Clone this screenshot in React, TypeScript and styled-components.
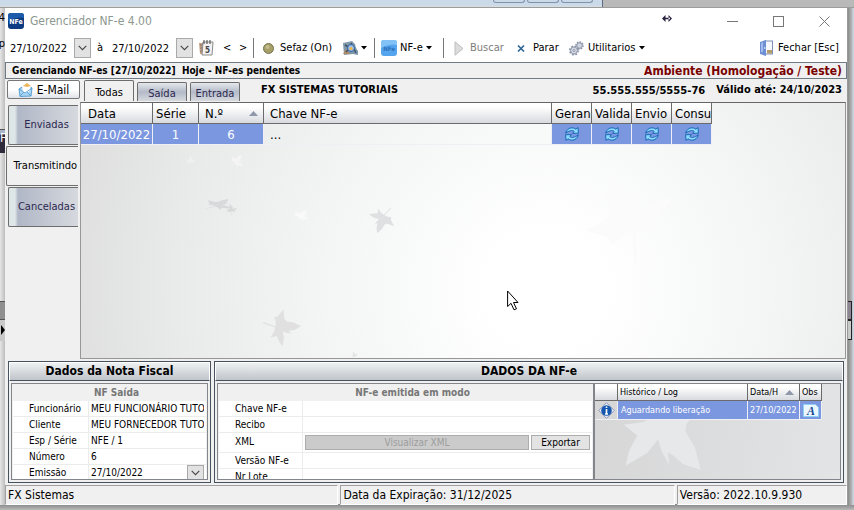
import React from "react";
import styled, { createGlobalStyle, css } from "styled-components";

const condensed = '"DejaVu Sans Condensed", "DejaVu Sans", sans-serif';
const wide = '"DejaVu Sans", sans-serif';

const GlobalStyle = createGlobalStyle`
  *, *::before, *::after { box-sizing: border-box; }
  html, body { margin: 0; }
  body { font-family: ${condensed}; font-size: 12px; line-height: 16px; color: #000; background: #bcbcbc; }
  button, input { font: inherit; color: inherit; margin: 0; padding: 0; border: 0; border-radius: 0; background: none; }
  svg { display: block; flex: none; }
`;

/* ---------- desktop behind the window ---------- */

const Desktop = styled.div`
  display: grid;
  grid-template-columns: 5px minmax(0, 1fr) 6px;
  grid-template-rows: 8px minmax(0, 1fr) 5px;
  min-height: 100vh;
`;

const TopStrip = styled.div`
  grid-column: 1 / -1;
  display: flex;
  justify-content: space-between;
  border-bottom: 1px solid #9c9c9c;
  background: #b9b9b9;
`;

const BackTitle = styled.div`
  width: 603px;
  display: flex;
  justify-content: flex-end;
  gap: 2px;
  padding-right: 9px;
  border-right: 1px solid #5c6b7d;
  background: linear-gradient(#cbdae9 5px, #d9dde0);
`;

const BackButton = styled.span`
  width: 32px;
  height: 3px;
  border: 1px solid #8093ab;
  border-top: 0;
  border-radius: 0 0 3px 3px;
`;

const LeftRail = styled.div`
  display: flex;
  flex-direction: column;
  overflow: hidden;
  background: linear-gradient(90deg, #e6e6e6, #bdbdbd);
`;

const RailText = styled.span<{ $h: number }>`
  height: ${(p) => p.$h}px;
  padding-top: 2px;
  font-size: 11px;
  direction: rtl;
`;

const RailBlock = styled.span<{ $h: number; $bg: string }>`
  height: ${(p) => p.$h}px;
  background: ${(p) => p.$bg};
  border-top: 1px solid #555;
  color: #fff;
  overflow: hidden;
`;

const RightRail = styled.div`
  display: flex;
  flex-direction: column;
  justify-content: flex-end;
  background: linear-gradient(90deg, #8c8c8c, #b8b8b8 4px, #c9d5e2 5px);
`;

const RailCell = styled.span<{ $bg: string; $h: number }>`
  height: ${(p) => p.$h}px;
  margin-right: 2px;
  background: ${(p) => p.$bg};
  border: 1px solid #222;
  border-left: 0;
`;

const RailGap = styled.span<{ $h: number }>`
  height: ${(p) => p.$h}px;
`;

const BottomStrip = styled.div`
  grid-column: 1 / -1;
  background: linear-gradient(#8f8f8f, #b9b9b9);
`;

/* ---------- window frame ---------- */

const Window = styled.main`
  position: relative;
  display: flex;
  flex-direction: column;
  min-width: 0;
  background: #f0f0f0;
  border-right: 1px solid #999;
`;

const TitleBar = styled.header`
  display: flex;
  align-items: center;
  height: 26px;
  padding-left: 3px;
  background: #fff;
  color: #8c978f;
`;

const Title = styled.h1`
  flex: 1;
  margin: 0;
  padding-left: 6px;
  font-size: 12px;
  font-weight: 400;
`;

const CaptionButton = styled.button`
  display: flex;
  justify-content: center;
  width: 46px;
`;

const ToolBar = styled.div`
  display: flex;
  align-items: center;
  height: 28px;
  padding: 0 5px 0 5px;
  background: #fff;
  font-size: 11px;
`;

const DateInput = styled.input`
  width: 64px;
  height: 20px;
`;

const DropButton = styled.button<{ $short?: boolean }>`
  display: flex;
  align-items: center;
  justify-content: center;
  width: 17px;
  height: ${(p) => (p.$short ? 15 : 20)}px;
  border: 1px solid #a9a9a9;
  background: #e2e2e2;
`;

const DateTo = styled.span`
  width: 21px;
  padding-left: 6px;
`;

const ToolButton = styled.button<{ $w: number; $muted?: boolean; $gap?: number }>`
  display: flex;
  align-items: center;
  gap: ${(p) => p.$gap ?? 6}px;
  width: ${(p) => p.$w}px;
  height: 20px;
  white-space: nowrap;
  color: ${(p) => (p.$muted ? "#7d7d7d" : "#000")};
`;

const CalendarButton = styled(ToolButton)`
  margin-left: 6px;
`;

const Divider = styled.span<{ $after: number }>`
  width: 1px;
  height: 20px;
  margin-right: ${(p) => p.$after}px;
  background: #777;
`;

const Spacer = styled.span`
  flex: 1;
`;

const InfoBar = styled.div`
  display: flex;
  align-items: center;
  justify-content: space-between;
  height: 17px;
  padding: 0 4px 0 6px;
  border: 1px solid #6e7b84;
  background: #f0f0f0;
  font: bold 10px/14px ${condensed};
  white-space: pre;
`;

const Environment = styled.strong`
  font-size: 12px;
  color: #7a0000;
`;

/* ---------- body ---------- */

const Body = styled.div`
  flex: 1;
  display: grid;
  grid-template-columns: 75px minmax(0, 1fr);
  min-height: 0;
  padding-right: 1px;
`;

const Side = styled.div`
  display: flex;
  flex-direction: column;
  align-items: flex-end;
  padding: 1px 2px 0 0;
`;

const MailButton = styled.button`
  display: flex;
  align-items: center;
  justify-content: center;
  gap: 4px;
  width: 73px;
  height: 19px;
  margin-right: -2px;
  margin-bottom: 6px;
  border: 1px solid #777;
  border-radius: 2px;
  background: linear-gradient(#fff 50%, #dfe3e8);
`;

const SideTab = styled.button<{ $active?: boolean }>`
  width: ${(p) => (p.$active ? 72 : 70)}px;
  height: 40px;
  margin-bottom: 1px;
  border: 1px solid #6d6d6d;
  border-right: 0;
  border-radius: 2px 0 0 2px;
  font-size: 11px;
  text-align: ${(p) => (p.$active ? "right" : "center")};
  padding: 0 ${(p) => (p.$active ? 1 : 0)}px 0 6px;
  color: ${(p) => (p.$active ? "#000" : "#2c2850")};
  background: ${(p) => (p.$active ? "#f0f0f0" : "linear-gradient(90deg, #dfe6e8 6px, #b0b7c6 9px, #d6d9de)")};
`;

const Content = styled.div`
  display: flex;
  flex-direction: column;
  min-width: 0;
`;

const TabRow = styled.div`
  display: flex;
  align-items: flex-end;
  gap: 3px;
  height: 23px;
  padding: 0 4px 1px 4px;
`;

const Tab = styled.button<{ $active?: boolean }>`
  width: 50px;
  height: ${(p) => (p.$active ? 21 : 19)}px;
  border: 1px solid #6d6d6d;
  border-bottom: 0;
  border-radius: 2px 2px 0 0;
  font-size: 11px;
  padding-top: 3px;
  color: ${(p) => (p.$active ? "#000" : "#2c2850")};
  background: ${(p) => (p.$active ? "#f0f0f0" : "linear-gradient(#e4e8ec, #b4bac8 9px, #d6d9de)")};
`;

const Company = styled.strong`
  flex: 1;
  align-self: center;
  padding-left: 18px;
  font-size: 11px;
`;

const TaxId = styled.strong`
  align-self: center;
  padding-top: 2px;
  font: bold 10px/16px ${wide};
`;

const Validity = styled.strong`
  align-self: center;
  padding-left: 8px;
  font-size: 11px;
`;

const Canvas = styled.section`
  position: relative;
  flex: 1;
  overflow: hidden;
  border: 1px solid #979797;
  border-top-color: #666;
  background: radial-gradient(circle at 61% 73%, #fff 60px, #f4f5f5 220px, #e9eaea 370px, #dfdfe0 480px);
`;

const Backdrop = styled.svg`
  position: absolute;
  inset: 0;
  width: 100%;
  height: 100%;
`;

const DataTable = styled.table<{ $small?: boolean }>`
  position: relative;
  border-collapse: separate;
  border-spacing: 0;
  table-layout: fixed;
  width: ${(p) => (p.$small ? 227 : 631)}px;
  font-size: ${(p) => (p.$small ? 9 : 13)}px;
  line-height: ${(p) => (p.$small ? 15 : 19)}px;
`;

const Col = styled.col<{ $w: number }>`
  width: ${(p) => p.$w}px;
`;

const Th = styled.th<{ $pad: number }>`
  height: ${(p) => (p.$pad === 2 ? 17 : 21)}px;
  padding: 0 0 0 ${(p) => p.$pad}px;
  border-right: 1px solid #6b6b6b;
  border-bottom: 1px solid #6b6b6b;
  background: linear-gradient(#fff 20%, #d8dadf);
  font-weight: 400;
  text-align: left;
  white-space: nowrap;
  overflow: hidden;
`;

const HeadSort = styled.span`
  display: flex;
  align-items: center;
  justify-content: space-between;
  padding-right: 5px;
`;

const Td = styled.td<{ $selected?: boolean; $small?: boolean; $left?: number }>`
  height: ${(p) => (p.$small ? 19 : 21)}px;
  padding: 0 0 0 ${(p) => p.$left ?? 0}px;
  border-right: 1px solid #eef0f4;
  border-bottom: 1px solid #eef0f4;
  text-align: ${(p) => (p.$left ? "left" : "center")};
  white-space: nowrap;
  overflow: hidden;
  ${(p) => p.$selected && css`background: #7b97e0; color: #fff;`}
  svg { margin: 0 auto; }
`;

/* ---------- detail panels ---------- */

const Panels = styled.div`
  display: grid;
  grid-template-columns: 203px minmax(0, 1fr);
  gap: 3px;
  height: 125px;
  padding: 2px 3px 1px;
`;

const Panel = styled.section`
  display: flex;
  flex-direction: column;
  min-width: 0;
  border: 1px solid #46525e;
  overflow: hidden;
`;

const PanelTitle = styled.h2`
  height: 19px;
  margin: 0;
  border: 1px solid #fff;
  border-bottom: 1px solid #46525e;
  background: linear-gradient(#eef0f1, #c0c5cb);
  font-size: 12px;
  line-height: 17px;
  text-align: center;
`;

const PanelBody = styled.div`
  flex: 1;
  display: flex;
  min-height: 0;
  padding: 2px;
`;

const Form = styled.div`
  flex: 1;
  min-width: 0;
  border: 1px solid #82858c;
  overflow: hidden;
  font-size: 10px;
  padding: 0 1px 1px;
`;

const FormClip = styled.div`
  height: 95px;
  overflow: hidden;
`;

const FormTitle = styled.h3`
  height: 17px;
  margin: 0;
  padding-left: 14px;
  font-size: 10px;
  line-height: 18px;
  text-align: center;
  color: #777;
`;

const Row = styled.div<{ $labelWidth: number; $tall?: boolean }>`
  display: grid;
  grid-template-columns: ${(p) => p.$labelWidth}px minmax(0, 1fr);
  height: ${(p) => (p.$tall ? 20 : 16)}px;
  line-height: ${(p) => (p.$tall ? 18 : 15)}px;
  background: #fff;
  border-bottom: 1px solid #ececec;
`;

const RowLabel = styled.label`
  padding-left: 16px;
  border-right: 1px solid #ececec;
  white-space: nowrap;
`;

const RowValue = styled.div`
  display: flex;
  align-items: center;
  gap: 2px;
  min-width: 0;
  padding: 0 2px;
`;

const TextField = styled.input`
  flex: 1;
  min-width: 0;
  height: 15px;
`;

const FlatButton = styled.button<{ $grow?: boolean }>`
  flex: ${(p) => (p.$grow ? "1" : "0 0 59px")};
  height: 15px;
  border: 1px solid #adadad;
  line-height: 13px;
  background: ${(p) => (p.$grow ? "#cbcbcb" : "#e3e3e3")};
  color: ${(p) => (p.$grow ? "#9d9d9d" : "#000")};
`;

const LogBox = styled.div`
  width: 247px;
  position: relative;
  overflow: hidden;
  border: 1px solid #82858c;
  background: linear-gradient(100deg, #d6d6d7, #e3e4e5);
`;

/* ---------- status bar ---------- */

const StatusBar = styled.footer`
  display: grid;
  grid-template-columns: 333fr 334fr 170fr;
  gap: 2px;
  height: 21px;
  padding-top: 1px;
  border-bottom: 1px solid #8a8a8a;
`;

const StatusCell = styled.span`
  padding-left: 2px;
  border: 1px solid #a0a0a0;
  border-right-color: #fff;
  border-bottom-color: #fff;
  line-height: 18px;
  white-space: nowrap;
`;

const Pointer = styled.svg`
  position: absolute;
  left: 502px;
  top: 282px;
`;

const ResizePointer = styled.svg`
  position: absolute;
  left: 657px;
  top: 7px;
`;

/* ---------- drawings ---------- */

const Caret = () => (
  <svg width="6" height="4" viewBox="0 0 6 4"><path d="M0 0h6L3 3.6z" fill="#000" /></svg>
);

const Chevron = () => (
  <svg width="9" height="6" viewBox="0 0 9 6"><path d="M.7 .8 4.5 4.6 8.3.8" fill="none" stroke="#444" strokeWidth="1.1" /></svg>
);

const SortUp = () => (
  <svg width="9" height="5" viewBox="0 0 9 5"><path d="M0 5 4.5 0 9 5z" fill="#8f98a8" /></svg>
);

const AppIcon = ({ light }: { light?: boolean }) => (
  <svg width="16" height="16" viewBox="0 0 16 16">
    <rect width="16" height="16" rx="3" fill={light ? "#55a5ee" : "#0d3c82"} />
    <path d="M0 3a3 3 0 0 1 3-3h10a3 3 0 0 1 3 3v2Q8 3 0 8z" fill={light ? "#83c2f6" : "#1c5cab"} />
    <text x="8" y="11" textAnchor="middle" fontSize={light ? 6 : 7} fontWeight="bold" fill={light ? "#2d70bb" : "#fff"}>NFe</text>
  </svg>
);

const CalendarIcon = () => (
  <svg width="15" height="16" viewBox="0 0 15 16">
    <path d="M0 3h5v11H1z" fill="#c9a184" />
    <path d="M1 5h3M1 8h3M1 11h3" stroke="#77706a" />
    <path d="M4 2h10l-1 13H3z" fill="#f2f2f2" stroke="#8b8b8b" />
    <path d="M5 0v4M8 0v4M11 0v4" stroke="#444" />
    <text x="8.500" y="13" textAnchor="middle" fontSize="8" fontWeight="bold" fill="#444">5</text>
  </svg>
);

const StatusDot = () => (
  <svg width="11" height="11" viewBox="0 0 11 11">
    <circle cx="5.500" cy="5.500" r="5" fill="#a69f68" stroke="#77724f" />
    <circle cx="4.500" cy="4" r="2" fill="#c3bd8d" />
  </svg>
);

const ToolsIcon = () => (
  <svg width="16" height="15" viewBox="0 0 16 15">
    <path d="M0 2 9 0l3 3 1 4 2 3v4l-5-1-9 1z" fill="#7f99ab" />
    <path d="M0 13 3 8l4 5z" fill="#b38a64" />
    <path d="M2 4l5 3-4 4M8 2l5 10" fill="none" stroke="#3f5368" strokeWidth="1.500" />
    <circle cx="8" cy="7" r="3.500" fill="#9cc0ea" stroke="#35619d" />
    <circle cx="8" cy="7.500" r="1.600" fill="#f0ba45" />
  </svg>
);

const PlayIcon = () => (
  <svg width="10" height="15" viewBox="0 0 10 15"><path d="M1 .8 9 7.500 1 14.200z" fill="#dcdcdc" stroke="#bdbdbd" /></svg>
);

const StopIcon = () => (
  <svg width="8" height="7" viewBox="0 0 8 7"><path d="M1 .5 7 6.500M7 .5 1 6.500" stroke="#2d6696" strokeWidth="1.600" /></svg>
);

const GearsIcon = () => (
  <svg width="15" height="15" viewBox="0 0 15 15">
    <g fill="#d3d7e2" stroke="#8c94a8">
      <circle cx="10.500" cy="4.500" r="3.400" strokeWidth="1.800" strokeDasharray="1.500 1.100" />
      <circle cx="10.500" cy="4.500" r="2.600" strokeWidth=".8" />
      <circle cx="5" cy="9.500" r="4.200" strokeWidth="1.800" strokeDasharray="1.800 1.500" />
      <circle cx="5" cy="9.500" r="3.400" strokeWidth=".8" />
      <circle cx="5" cy="9.500" r="1" fill="#fff" />
    </g>
  </svg>
);

const DoorIcon = () => (
  <svg width="13" height="16" viewBox="0 0 13 16">
    <rect x="5" y="1" width="7.500" height="13" fill="#f7f8fb" stroke="#7d8fb6" />
    <path d="M7 10h5v3.500H7z" fill="#b49d6b" />
    <path d="M0 2 6 0v16l-6-2z" fill="#6d8fd3" />
    <path d="M1 3 3 2.300v10L1 12z" fill="#a3baea" />
    <circle cx="4.800" cy="8" r=".8" fill="#fff" />
  </svg>
);

const MailIcon = () => (
  <svg width="15" height="14" viewBox="0 0 15 14">
    <path d="M1 6 9 1l5 4-1 8-11 .5z" fill="#a8d5f3" stroke="#5ba0d2" />
    <path d="M4 3 10 1l3 2-2 6-6 1z" fill="#fff" />
    <path d="M5 3 9 0l4 3-4 1z" fill="#efb75b" />
    <path d="M1 6l6 4 7-5M2 13l4-4M13 13l-4-4" fill="none" stroke="#4794cd" strokeWidth=".8" />
  </svg>
);

const RefreshIcon = () => (
  <svg width="14" height="14" viewBox="0 0 14 14">
    <g fill="#8fdcff" stroke="#0b5cae" strokeWidth=".9" strokeLinejoin="round">
      <path d="M.6 6.200C1.400 3 3.800.8 7 .8c1.600 0 2.800.5 3.800 1.400L13 .6l.4 5.600-5.800.2L9.200 4.400C7.200 2.900 4.400 3.400.6 6.200z" />
      <path d="M13.400 7.800c-.8 3.200-3.200 5.400-6.400 5.400-1.600 0-2.800-.5-3.800-1.400L1 13.400.6 7.800l5.800-.2-1.600 2c2 1.500 4.800 1 8.600-1.800z" />
    </g>
  </svg>
);

const InfoIcon = () => (
  <svg width="17" height="17" viewBox="0 0 17 17">
    <path d="M8.500.7 16.300 8.500 8.500 16.300.7 8.500z" fill="#e9ecf4" stroke="#8997b8" strokeLinejoin="round" />
    <circle cx="8.500" cy="8.500" r="5.300" fill="#1557ae" />
    <path d="M8.500 4.500v1.600M8.500 7v5M7 12h3" stroke="#fff" strokeWidth="1.600" />
  </svg>
);

const NoteIcon = () => (
  <svg width="16" height="13" viewBox="0 0 16 13">
    <path d="M.5.500h12l3 3v9H.5z" fill="#eaf6ff" stroke="#8bd0f4" />
    <text x="8" y="10.500" textAnchor="middle" fontFamily="Liberation Serif" fontSize="12" fontStyle="italic" fontWeight="bold" fill="#14488e">A</text>
  </svg>
);

const leaf =
  "M-27-54-13-44-7-34-3-30-1-41 2-28 2-16 15-25 37-30 30-18 19-7 28 6 10 3 1 5 2 37-1 37-2 5-13 9-23 17-26 10-50 2-38-3-27-10-24-16-28-33z";

const Leaf = ({ t, fill }: { t: string; fill: string }) => <path d={leaf} transform={t} fill={fill} />;

const MainBackdrop = () => (
  <Backdrop viewBox="0 0 764 256" preserveAspectRatio="xMinYMin slice" aria-hidden="true">
    <Leaf t="translate(302 113) rotate(-135) scale(.3)" fill="#dfe0e1" />
    <Leaf t="translate(196 225) rotate(112) scale(.4)" fill="#e0e0e1" />
    <Leaf t="translate(136 103) scale(.34 .14) rotate(60)" fill="#d8d9da" />
    <Leaf t="translate(151 108) rotate(10) scale(.12)" fill="#d8d9da" />
    <Leaf t="translate(219 114) scale(.2 .14) rotate(60)" fill="#f9f9f9" />
    <Leaf t="translate(155 60) scale(.16) rotate(60)" fill="#f5f5f5" />
    <Leaf t="translate(110 59) rotate(20) scale(.11)" fill="#efefef" />
    <Leaf t="translate(274 253) scale(.08)" fill="#e4e4e4" />
    <Leaf t="translate(554 125)" fill="#fbfbfb" />
  </Backdrop>
);

const statusColumns = ["Geran", "Valida", "Envio", "Consu"];

const invoiceFields = [
  ["Funcionário", "MEU FUNCIONÁRIO TUTORIAIS"],
  ["Cliente", "MEU FORNECEDOR TUTORIAIS"],
  ["Esp / Série", "NFE / 1"],
  ["Número", "6"],
  ["Emissão", "27/10/2022"],
];

export default function App() {
  return (
    <>
      <GlobalStyle />
      <Desktop>
        <TopStrip>
          <BackTitle><BackButton /><BackButton /><BackButton /></BackTitle>
        </TopStrip>
        <LeftRail aria-hidden="true">
          <RailText $h={26}>4</RailText>
          <RailText $h={95}>up</RailText>
          <RailBlock $h={24} $bg="linear-gradient(#a7b4c9 4px, #2e2a3c 5px)">F</RailBlock>
          <RailGap $h={148} />
          <RailBlock $h={18} $bg="#8f8f8f" />
          <RailBlock $h={22} $bg="#c9c9c9">
            <svg width="5" height="20" viewBox="0 0 5 20"><path d="M1 5 5 10 1 15z" fill="#000" /></svg>
          </RailBlock>
        </LeftRail>
        <Window>
          <TitleBar>
            <AppIcon />
            <Title>Gerenciador NF-e 4.00</Title>
            <CaptionButton aria-label="Minimizar"><svg width="11" height="11"><path d="M0 5.500h11" stroke="#777" /></svg></CaptionButton>
            <CaptionButton aria-label="Maximizar"><svg width="11" height="11"><rect x=".5" y=".5" width="10" height="10" fill="none" stroke="#777" /></svg></CaptionButton>
            <CaptionButton aria-label="Fechar janela"><svg width="11" height="11"><path d="M.5.500l10 10M10.500.500l-10 10" stroke="#777" /></svg></CaptionButton>
          </TitleBar>
          <ToolBar>
            <DateInput aria-label="Data inicial" defaultValue="27/10/2022" />
            <DropButton aria-label="Abrir data inicial"><Chevron /></DropButton>
            <DateTo>à</DateTo>
            <DateInput aria-label="Data final" defaultValue="27/10/2022" />
            <DropButton aria-label="Abrir data final"><Chevron /></DropButton>
            <CalendarButton $w={24} aria-label="Calendário"><CalendarIcon /></CalendarButton>
            <ToolButton $w={16}>&lt;</ToolButton>
            <ToolButton $w={14}>&gt;</ToolButton>
            <Divider $after={9} />
            <ToolButton $w={80}><StatusDot />Sefaz (On)</ToolButton>
            <ToolButton $w={31} $gap={2} aria-label="Configurações"><ToolsIcon /><Caret /></ToolButton>
            <Divider $after={6} />
            <ToolButton $w={62} $gap={3}><AppIcon light />NF-e<Caret /></ToolButton>
            <Divider $after={10} />
            <ToolButton $w={63} $muted><PlayIcon />Buscar</ToolButton>
            <ToolButton $w={52} $gap={8}><StopIcon />Parar</ToolButton>
            <ToolButton $w={80} $gap={4}><GearsIcon />Utilitarios<Caret /></ToolButton>
            <Spacer />
            <ToolButton $w={82} $gap={5}><DoorIcon />Fechar [Esc]</ToolButton>
          </ToolBar>
          <InfoBar>
            <span>Gerenciando NF-es [27/10/2022]  Hoje - NF-es pendentes</span>
            <Environment>Ambiente (Homologação / Teste)</Environment>
          </InfoBar>
          <Body>
            <Side>
              <MailButton><MailIcon />E-Mail</MailButton>
              <SideTab>Enviadas</SideTab>
              <SideTab $active>Transmitindo</SideTab>
              <SideTab>Canceladas</SideTab>
            </Side>
            <Content>
              <TabRow>
                <Tab $active>Todas</Tab>
                <Tab>Saída</Tab>
                <Tab>Entrada</Tab>
                <Company>FX SISTEMAS TUTORIAIS</Company>
                <TaxId>55.555.555/5555-76</TaxId>
                <Validity>Válido até: 24/10/2023</Validity>
              </TabRow>
              <Canvas>
                <MainBackdrop />
                <DataTable>
                  <colgroup>
                    {[72, 46, 65, 288, 40, 40, 40, 40].map((w, i) => <Col key={i} $w={w} />)}
                  </colgroup>
                  <thead>
                    <tr>
                      <Th $pad={7}>Data</Th>
                      <Th $pad={3}>Série</Th>
                      <Th $pad={6}><HeadSort>N.º<SortUp /></HeadSort></Th>
                      <Th $pad={6}>Chave NF-e</Th>
                      {statusColumns.map((c) => <Th key={c} $pad={3}>{c}</Th>)}
                    </tr>
                  </thead>
                  <tbody>
                    <tr>
                      <Td $selected>27/10/2022</Td>
                      <Td $selected>1</Td>
                      <Td $selected>6</Td>
                      <Td $left={6}>...</Td>
                      {statusColumns.map((c) => <Td key={c} $selected><RefreshIcon /></Td>)}
                    </tr>
                  </tbody>
                </DataTable>
              </Canvas>
            </Content>
          </Body>
          <Panels>
            <Panel>
              <PanelTitle>Dados da Nota Fiscal</PanelTitle>
              <PanelBody>
                <Form>
                  <FormClip>
                    <FormTitle>NF Saída</FormTitle>
                    {invoiceFields.map(([label, value], i) => (
                      <Row key={label} $labelWidth={76}>
                        <RowLabel htmlFor={`nf-${i}`}>{label}</RowLabel>
                        <RowValue>
                          <TextField id={`nf-${i}`} defaultValue={value} />
                          {label === "Emissão" && <DropButton $short aria-label="Abrir emissão"><Chevron /></DropButton>}
                        </RowValue>
                      </Row>
                    ))}
                  </FormClip>
                </Form>
              </PanelBody>
            </Panel>
            <Panel>
              <PanelTitle>DADOS DA NF-e</PanelTitle>
              <PanelBody>
                <Form>
                  <FormClip>
                    <FormTitle>NF-e emitida em modo</FormTitle>
                    <Row $labelWidth={84}>
                      <RowLabel htmlFor="chave">Chave NF-e</RowLabel>
                      <RowValue><TextField id="chave" /></RowValue>
                    </Row>
                    <Row $labelWidth={84}>
                      <RowLabel htmlFor="recibo">Recibo</RowLabel>
                      <RowValue><TextField id="recibo" /></RowValue>
                    </Row>
                    <Row $labelWidth={84} $tall>
                      <RowLabel htmlFor="xml">XML</RowLabel>
                      <RowValue>
                        <FlatButton id="xml" $grow disabled>Visualizar XML</FlatButton>
                        <FlatButton>Exportar</FlatButton>
                      </RowValue>
                    </Row>
                    <Row $labelWidth={84}>
                      <RowLabel htmlFor="versao">Versão NF-e</RowLabel>
                      <RowValue><TextField id="versao" /></RowValue>
                    </Row>
                    <Row $labelWidth={84}>
                      <RowLabel htmlFor="lote">Nr Lote</RowLabel>
                      <RowValue><TextField id="lote" /></RowValue>
                    </Row>
                  </FormClip>
                </Form>
                <LogBox>
                  <Backdrop viewBox="0 0 246 95" preserveAspectRatio="xMinYMin slice" aria-hidden="true">
                    <Leaf t="translate(60 38) rotate(163) scale(1.1)" fill="#e7e8e9" />
                  </Backdrop>
                  <DataTable $small>
                    <colgroup>
                      {[23, 130, 52, 22].map((w, i) => <Col key={i} $w={w} />)}
                    </colgroup>
                    <thead>
                      <tr>
                        <Th $pad={2} aria-label="Tipo" />
                        <Th $pad={2}>Histórico / Log</Th>
                        <Th $pad={2}><HeadSort>Data/H<SortUp /></HeadSort></Th>
                        <Th $pad={2}>Obs</Th>
                      </tr>
                    </thead>
                    <tbody>
                      <tr>
                        <Td $small><InfoIcon /></Td>
                        <Td $small $selected $left={3}>Aguardando liberação</Td>
                        <Td $small $selected $left={2}>27/10/2022</Td>
                        <Td $small $selected><NoteIcon /></Td>
                      </tr>
                    </tbody>
                  </DataTable>
                </LogBox>
              </PanelBody>
            </Panel>
          </Panels>
          <StatusBar>
            <StatusCell>FX Sistemas</StatusCell>
            <StatusCell>Data da Expiração: 31/12/2025</StatusCell>
            <StatusCell>Versão: 2022.10.9.930</StatusCell>
          </StatusBar>
          <ResizePointer width="10" height="7" viewBox="0 0 10 7" aria-hidden="true">
            <path d="M0 3.500 3.500 0v7zM10 3.500 6.500 0v7zM2 2.800h6v1.400H2z" fill="#2b2340" />
          </ResizePointer>
          <Pointer width="13" height="21" viewBox="0 0 13 21" aria-hidden="true">
            <path d="M.6 1v15.500L4 13.300l3 6.500 2.500-1-3-6.300H11z" fill="#fff" stroke="#000" />
          </Pointer>
        </Window>
        <RightRail aria-hidden="true">
          <RailCell $h={19} $bg="#8d8494" />
          <RailCell $h={20} $bg="#c9c9c9" />
          <RailGap $h={165} />
        </RightRail>
        <BottomStrip />
      </Desktop>
    </>
  );
}
